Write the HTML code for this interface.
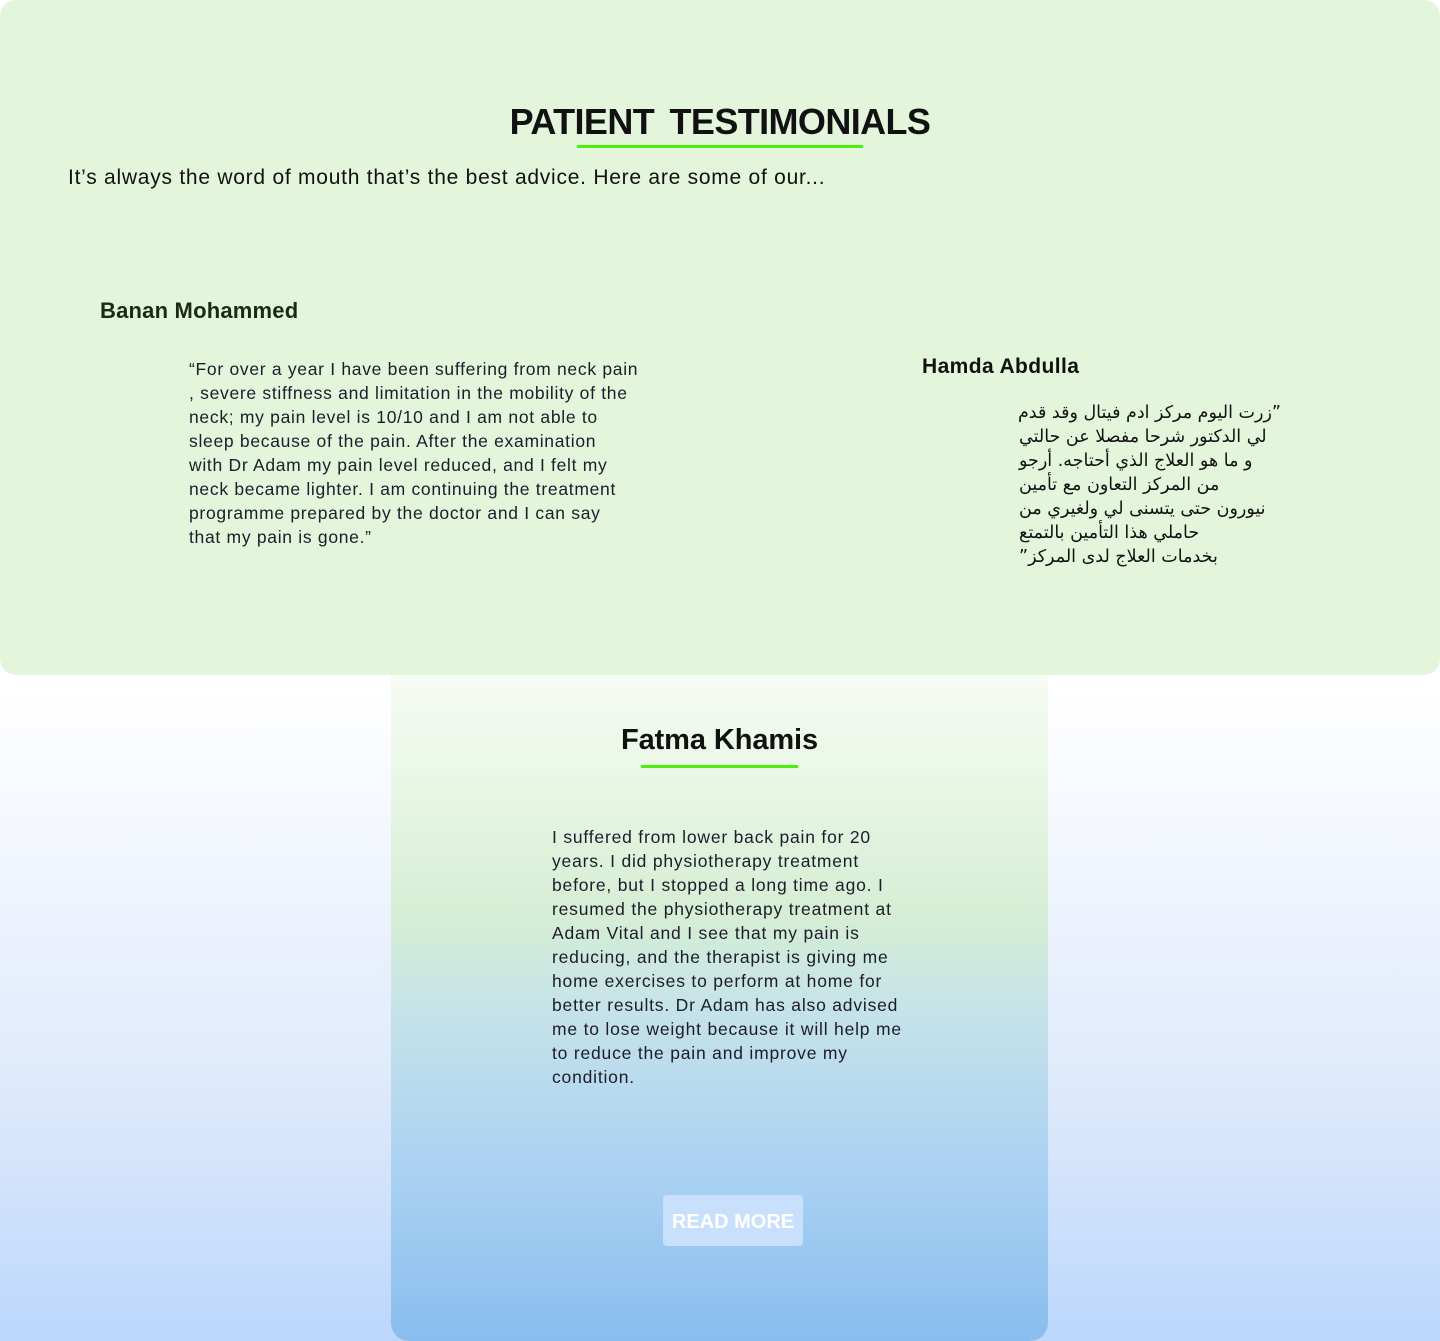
<!DOCTYPE html>
<html><head><meta charset="utf-8"><style>
*{margin:0;padding:0;box-sizing:border-box}
html,body{width:1440px;height:1341px;overflow:hidden}
body{font-family:"Liberation Sans",sans-serif;color:#111;position:relative;
background:linear-gradient(180deg,#fff 0px,#fff 690px,#f2f6fe 850px,#dde9fb 1100px,#bbd7fb 1341px);}
.top{position:absolute;left:0;top:0;width:1440px;height:675px;background:#e3f6dc;border-radius:16px;z-index:2}
.card{position:absolute;left:391px;top:655px;width:657px;height:686px;border-radius:0 0 18px 18px;
background:linear-gradient(180deg,#f9fcf7 0px,#eaf7e6 120px,#d5eed4 260px,#c5e2ea 360px,#aad1f2 520px,#88bdee 686px);z-index:1}
.abs{position:absolute;white-space:nowrap}
h1{position:absolute;left:0;width:1440px;top:101px;text-align:center;font-size:36px;font-weight:bold;letter-spacing:-0.6px;word-spacing:6px}
.ul{position:absolute;height:3px;background:#4cf00a}
.p{font-size:17.5px;line-height:24px;color:#1c1c2a;letter-spacing:0.7px}
</style></head><body>
<div class="top">
<h1>PATIENT TESTIMONIALS</h1>
<div class="ul" style="left:577px;top:145px;width:286px"></div>
<div class="abs" style="left:68px;top:166px;font-size:21px;letter-spacing:0.75px">It’s always the word of mouth that’s the best advice. Here are some of our...</div>
<div class="abs" style="left:100px;top:298px;font-size:22px;font-weight:bold;color:#1a2a14;letter-spacing:0.2px">Banan Mohammed</div>
<div class="abs p" style="left:189px;top:357px">“For over a year I have been suffering from neck pain<br>, severe stiffness and limitation in the mobility of the<br>neck; my pain level is 10/10 and I am not able to<br>sleep because of the pain. After the examination<br>with Dr Adam my pain level reduced, and I felt my<br>neck became lighter. I am continuing the treatment<br>programme prepared by the doctor and I can say<br>that my pain is gone.”</div>
<div class="abs" style="left:922px;top:355px;font-size:21px;font-weight:bold;letter-spacing:0.4px">Hamda Abdulla</div>
<div class="abs" style="left:1019px;top:401px;font-family:'DejaVu Sans',sans-serif;font-size:17.5px;line-height:24px;color:#111">
<div dir="rtl" style="text-align:left;width:262px">”زرت اليوم مركز ادم فيتال وقد قدم</div>
<div dir="rtl" style="text-align:left;width:262px">لي الدكتور شرحا مفصلا عن حالتي</div>
<div dir="rtl" style="text-align:left;width:262px">و ما هو العلاج الذي أحتاجه. أرجو</div>
<div dir="rtl" style="text-align:left;width:262px">من المركز التعاون مع تأمين</div>
<div dir="rtl" style="text-align:left;width:262px">نيورون حتى يتسنى لي ولغيري من</div>
<div dir="rtl" style="text-align:left;width:262px">حاملي هذا التأمين بالتمتع</div>
<div dir="rtl" style="text-align:left;width:262px">بخدمات العلاج لدى المركز”</div>
</div>
</div>
<div class="card">
<div class="abs" style="left:0;width:657px;text-align:center;top:69px;font-size:29px;font-weight:bold;letter-spacing:-0.1px">Fatma Khamis</div>
<div class="ul" style="left:250px;top:110px;width:157px"></div>
<div class="abs p" style="left:161px;top:170px;letter-spacing:0.8px">I suffered from lower back pain for 20<br>years. I did physiotherapy treatment<br>before, but I stopped a long time ago. I<br>resumed the physiotherapy treatment at<br>Adam Vital and I see that my pain is<br>reducing, and the therapist is giving me<br>home exercises to perform at home for<br>better results. Dr Adam has also advised<br>me to lose weight because it will help me<br>to reduce the pain and improve my<br>condition.</div>
<div class="abs" style="left:272px;top:540px;width:140px;height:51px;background:#c8e0fb;border-radius:4px;color:#fff;font-weight:bold;font-size:20px;text-align:center;line-height:54px">READ MORE</div>
</div>
</body></html>
